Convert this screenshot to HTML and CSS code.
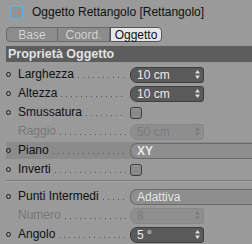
FILE: index.html
```html
<!DOCTYPE html>
<html>
<head>
<meta charset="utf-8">
<link rel="stylesheet" href="styles.css">
</head>
<body>
<div class="panel">
  <div class="title">
    <span class="tbox"></span>
    <span class="ttext">Oggetto Rettangolo [Rettangolo]</span>
  </div>
  <div class="tabs">
    <div class="tab first">Base</div>
    <div class="tab">Coord.</div>
    <div class="tab active">Oggetto</div>
  </div>
  <div class="section">Proprietà Oggetto</div>
  <div class="rows">
    <div class="row">
      <div class="label"><span class="bullet"></span><span class="name">Larghezza</span><span class="dots"></span></div>
      <div class="field">10 cm<svg class="spin" width="5" height="9" viewBox="0 0 5 9"><path d="M2.5 0 L5 3.5 L0 3.5Z M0 5.5 L5 5.5 L2.5 9Z"/></svg></div>
    </div>
    <div class="row">
      <div class="label"><span class="bullet"></span><span class="name">Altezza</span><span class="dots"></span></div>
      <div class="field">10 cm<svg class="spin" width="5" height="9" viewBox="0 0 5 9"><path d="M2.5 0 L5 3.5 L0 3.5Z M0 5.5 L5 5.5 L2.5 9Z"/></svg></div>
    </div>
    <div class="row">
      <div class="label"><span class="bullet"></span><span class="name">Smussatura</span><span class="dots"></span></div>
      <div class="check"></div>
    </div>
    <div class="row">
      <div class="label off"><span class="nobullet"></span><span class="name">Raggio</span><span class="dots"></span></div>
      <div class="field disabled">50 cm<svg class="spin" width="5" height="9" viewBox="0 0 5 9"><path d="M2.5 0 L5 3.5 L0 3.5Z M0 5.5 L5 5.5 L2.5 9Z"/></svg></div>
    </div>
    <div class="row hl">
      <div class="label"><span class="bullet"></span><span class="name">Piano</span><span class="dots"></span></div>
      <div class="drop strong">XY</div>
    </div>
    <div class="row">
      <div class="label"><span class="bullet"></span><span class="name">Inverti</span><span class="dots"></span></div>
      <div class="check"></div>
    </div>
    <div class="sep"></div>
    <div class="row">
      <div class="label"><span class="bullet"></span><span class="name">Punti Intermedi</span><span class="dots"></span></div>
      <div class="drop">Adattiva</div>
    </div>
    <div class="row">
      <div class="label off"><span class="nobullet"></span><span class="name">Numero</span><span class="dots"></span></div>
      <div class="field disabled">8<svg class="spin" width="5" height="9" viewBox="0 0 5 9"><path d="M2.5 0 L5 3.5 L0 3.5Z M0 5.5 L5 5.5 L2.5 9Z"/></svg></div>
    </div>
    <div class="row">
      <div class="label"><span class="bullet"></span><span class="name">Angolo</span><span class="dots"></span></div>
      <div class="field">5 °<svg class="spin" width="5" height="9" viewBox="0 0 5 9"><path d="M2.5 0 L5 3.5 L0 3.5Z M0 5.5 L5 5.5 L2.5 9Z"/></svg></div>
    </div>
  </div>
</div>
</body>
</html>
```

FILE: styles.css
```css
html, body {
  margin: 0;
  padding: 0;
}
body {
  width: 252px;
  height: 244px;
  overflow: hidden;
  background: #9a9a9a;
  font-family: "Liberation Sans", Arial, sans-serif;
  font-size: 12px;
  color: #111;
}
.panel {
  display: flex;
  flex-direction: column;
}
.title {
  height: 24px;
  display: flex;
  align-items: center;
  padding-left: 10px;
}
.tbox {
  width: 13px;
  height: 13px;
  box-sizing: border-box;
  border: 1px solid #5ab4e8;
  box-shadow: 0 0 0 1px rgba(90,180,232,0.35);
  background: #939393;
  border-radius: 1px;
  margin-right: 9px;
}
.ttext {
  font-size: 12px;
  color: #111;
}
.tabs {
  display: flex;
  margin: 3px 0 0 6px;
  height: 15px;
}
.tab {
  width: 52px;
  height: 15px;
  box-sizing: border-box;
  background: #8c8c8c;
  border: 1px solid #6a6a6a;
  border-left: none;
  color: #d6d6d6;
  text-shadow: 0 0 1px #777;
  display: flex;
  align-items: center;
  justify-content: center;
  font-size: 12px;
}
.tab.first {
  border-left: 1px solid #6a6a6a;
  border-radius: 4px 0 0 4px;
}
.tab.active {
  background: #e6e6e6;
  color: #111;
  text-shadow: none;
  border: 1px solid #555;
  border-radius: 0 4px 4px 0;
}
.section {
  margin: 4px 0 0 6px;
  height: 16px;
  background: #5d5d5d;
  color: #e2e2e2;
  font-weight: bold;
  font-size: 12.5px;
  display: flex;
  align-items: center;
  padding-left: 2px;
}
.rows {
  display: flex;
  flex-direction: column;
  gap: 2px;
  padding: 4px 0 0 6px;
}
.row {
  height: 17px;
  display: grid;
  grid-template-columns: 124px minmax(0, 1fr);
  align-items: center;
}
.row.hl {
  background: #8b8b8b;
}
.label {
  display: flex;
  align-items: baseline;
  padding-right: 4px;
  height: 17px;
  line-height: 17px;
}
.bullet {
  align-self: center;
  width: 5px;
  height: 5px;
  box-sizing: border-box;
  border: 1px solid #1a1a1a;
  border-radius: 50%;
  margin-right: 7px;
  flex: none;
}
.nobullet {
  width: 5px;
  margin-right: 7px;
  flex: none;
}
.name {
  color: #111;
  white-space: nowrap;
}
.label.off .name {
  color: #757575;
  text-shadow: 0 1px 0 rgba(255,255,255,0.1);
}
.dots {
  flex: 1;
  height: 1px;
  margin-left: 4px;
  background-image: repeating-linear-gradient(to right, #555 0 1px, transparent 1px 5px);
}
.field {
  justify-self: start;
  width: 74px;
  height: 16px;
  box-sizing: border-box;
  background: #5a5a5a;
  border: 1px solid #3f3f3f;
  border-radius: 7px 3px 3px 7px;
  color: #ececec;
  display: flex;
  align-items: center;
  justify-content: space-between;
  padding: 0 3px 0 6px;
  font-size: 12px;
}
.field .spin {
  fill: #dcdcdc;
}
.field.disabled {
  background: #8e8e8e;
  border-color: #878787;
  color: #7b7b7b;
}
.field.disabled .spin {
  fill: #7b7b7b;
}
.check {
  justify-self: start;
  width: 12px;
  height: 12px;
  box-sizing: border-box;
  border: 1px solid #3c3c3c;
  border-radius: 3px;
  background: #8a8a8a;
  box-shadow: inset 0 1px 1px rgba(255,255,255,0.15);
}
.drop {
  height: 16px;
  box-sizing: border-box;
  background: #8e8e8e;
  border: 1px solid #6a6a6a;
  border-right: none;
  border-radius: 7px 0 0 7px;
  color: #ebebeb;
  text-shadow: 0 0 1px #777;
  display: flex;
  align-items: center;
  padding-left: 6px;
}
.drop.strong {
  font-weight: bold;
}
.sep {
  height: 1px;
  background: #7a7a7a;
  border-bottom: 1px solid #a6a6a6;
  margin: 0 0 4px 0;
}
```
